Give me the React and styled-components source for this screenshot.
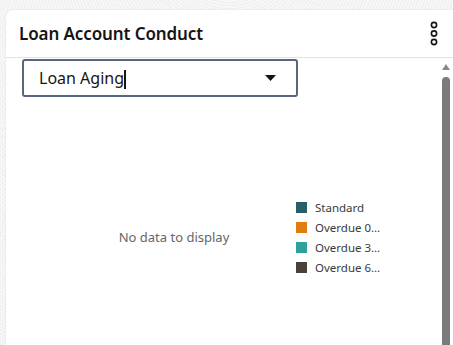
import React from 'react'
import styled, { createGlobalStyle } from 'styled-components'

const GlobalStyle = createGlobalStyle`
  html, body {
    margin: 0;
    padding: 0;
    background: #f3f3f3;
    overflow: hidden;
    font-family: "Noto Sans", "Open Sans", sans-serif;
  }
`

const Page = styled.div`
  width: 453px;
  height: 345px;
  padding: 10px 0 0 6px;
  box-sizing: border-box;
  overflow: hidden;
  background: repeating-radial-gradient(circle at 230px -60px, #f7f7f7 0 2px, #efefef 2px 3px);
`

const Card = styled.div`
  width: 460px;
  height: 400px;
  flex-shrink: 0;
  background: #fff;
  border-radius: 7px;
  box-shadow: 0 0 2px rgba(0, 0, 0, 0.12);
  display: flex;
  flex-direction: column;
`

const Header = styled.div`
  flex-shrink: 0;
  height: 48px;
  border-bottom: 1px solid #e3e3e3;
  display: flex;
  align-items: center;
  justify-content: space-between;
  padding: 0 0 0 13px;
  width: 447px;
  box-sizing: border-box;
`

const Title = styled.h2`
  margin: 0;
  font-size: 17px;
  font-weight: 600;
  color: #161513;
  letter-spacing: -0.1px;
`

const MenuButton = styled.button`
  border: none;
  background: none;
  padding: 0;
  width: 20px;
  height: 30px;
  margin-right: 9px;
  display: flex;
  align-items: center;
  justify-content: center;
  cursor: pointer;
`

const Body = styled.div`
  flex: 1;
  display: flex;
  width: 447px;
`

const Content = styled.div`
  flex: 1;
  display: flex;
  flex-direction: column;
  padding: 1px 0 0 16px;
`

const Select = styled.div`
  flex-shrink: 0;
  width: 276px;
  height: 38px;
  box-sizing: border-box;
  border: 2px solid #5b6580;
  border-radius: 3px;
  display: flex;
  align-items: center;
  justify-content: space-between;
  padding: 0 20px 0 15px;
  font-size: 16px;
  color: #161513;
`

const Cursor = styled.span`
  display: inline-block;
  width: 1.5px;
  height: 19px;
  background: #161513;
  vertical-align: middle;
`

const Chart = styled.div`
  flex-shrink: 0;
  display: flex;
  align-items: center;
  height: 280px;
`

const NoData = styled.div`
  width: 274px;
  box-sizing: border-box;
  padding-left: 30px;
  text-align: center;
  font-size: 13px;
  color: #666;
`

const Legend = styled.ul`
  list-style: none;
  margin: 0;
  padding: 0;
  display: flex;
  flex-direction: column;
  gap: 7px;
`

const LegendItem = styled.li`
  display: flex;
  align-items: center;
  gap: 8px;
  font-size: 11.5px;
  color: #3a3a3a;
  height: 13px;
`

const Swatch = styled.span`
  width: 11px;
  height: 11px;
  background: ${p => p.color};
`

const Scrollbar = styled.div`
  width: 8px;
  margin-right: 3px;
  display: flex;
  flex-direction: column;
  align-items: center;
  padding-top: 6px;
`

const Arrow = styled.div`
  width: 0;
  height: 0;
  border-left: 4px solid transparent;
  border-right: 4px solid transparent;
  border-bottom: 6px solid #8a8a8a;
`

const Thumb = styled.div`
  margin-top: 7px;
  width: 8px;
  flex: 1;
  background: #7b7b7b;
  border-radius: 4px 4px 0 0;
`

const legend = [
  { label: 'Standard', color: '#275f66' },
  { label: 'Overdue 0…', color: '#e07c10' },
  { label: 'Overdue 3…', color: '#2fa19c' },
  { label: 'Overdue 6…', color: '#4a413b' },
]

export default function App() {
  return (
    <>
      <GlobalStyle />
      <Page>
        <Card>
          <Header>
            <Title>Loan Account Conduct</Title>
            <MenuButton aria-label="menu">
              <svg width="10" height="26" viewBox="0 0 10 26">
                <circle cx="5" cy="4" r="2.6" fill="none" stroke="#161513" strokeWidth="1.6" />
                <circle cx="5" cy="12.5" r="2.6" fill="none" stroke="#161513" strokeWidth="1.6" />
                <circle cx="5" cy="21" r="2.6" fill="none" stroke="#161513" strokeWidth="1.6" />
              </svg>
            </MenuButton>
          </Header>
          <Body>
            <Content>
              <Select>
                <span>Loan Aging<Cursor /></span>
                <svg width="11" height="6" viewBox="0 0 11 6">
                  <path d="M0 0 L11 0 L5.5 6 Z" fill="#161513" />
                </svg>
              </Select>
              <Chart>
                <NoData>No data to display</NoData>
                <Legend>
                  {legend.map(item => (
                    <LegendItem key={item.label}>
                      <Swatch color={item.color} />
                      {item.label}
                    </LegendItem>
                  ))}
                </Legend>
              </Chart>
            </Content>
            <Scrollbar>
              <Arrow />
              <Thumb />
            </Scrollbar>
          </Body>
        </Card>
      </Page>
    </>
  )
}
